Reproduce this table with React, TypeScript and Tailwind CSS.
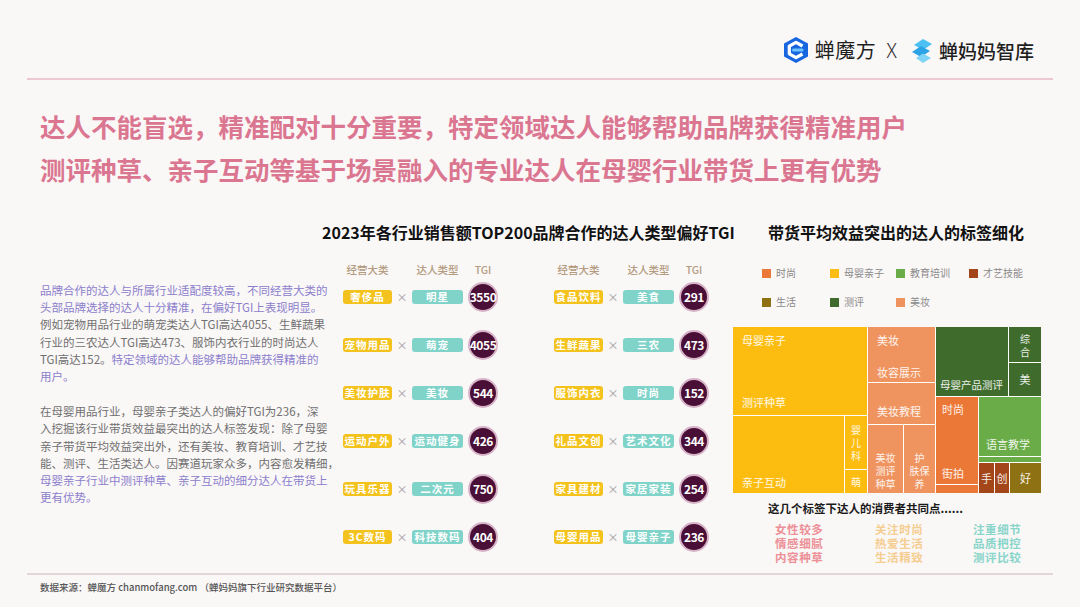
import React from "react";

const leftP1: [string, boolean][][] = [
  [["品牌合作的达人与所属行业适配度较高，不同经营大类的", true]],
  [["头部品牌选择的达人十分精准，在偏好TGI上表现明显。", true]],
  [["例如宠物用品行业的萌宠类达人TGI高达4055、生鲜蔬果", false]],
  [["行业的三农达人TGI高达473、服饰内衣行业的时尚达人", false]],
  [["TGI高达152。", false], ["特定领域的达人能够帮助品牌获得精准的", true]],
  [["用户。", true]],
];

const leftP2: [string, boolean][][] = [
  [["在母婴用品行业，母婴亲子类达人的偏好TGI为236，深", false]],
  [["入挖掘该行业带货效益最突出的达人标签发现：除了母婴", false]],
  [["亲子带货平均效益突出外，还有美妆、教育培训、才艺技", false]],
  [["能、测评、生活类达人。因赛道玩家众多，内容愈发精细，", false]],
  [["母婴亲子行业中测评种草、亲子互动的细分达人在带货上", true]],
  [["更有优势。", true]],
];

const leftRows = [
  ["奢侈品", "明星", "3550"],
  ["宠物用品", "萌宠", "4055"],
  ["美妆护肤", "美妆", "544"],
  ["运动户外", "运动健身", "426"],
  ["玩具乐器", "二次元", "750"],
  ["3C数码", "科技数码", "404"],
];

const rightRows = [
  ["食品饮料", "美食", "291"],
  ["生鲜蔬果", "三农", "473"],
  ["服饰内衣", "时尚", "152"],
  ["礼品文创", "艺术文化", "344"],
  ["家具建材", "家居家装", "254"],
  ["母婴用品", "母婴亲子", "236"],
];

const legend = [
  ["时尚", "bg-[#ec7838]"],
  ["母婴亲子", "bg-[#fdbd10]"],
  ["教育培训", "bg-[#6aac48]"],
  ["才艺技能", "bg-[#a3461a]"],
  ["生活", "bg-[#8d7112]"],
  ["测评", "bg-[#3f6c2d]"],
  ["美妆", "bg-[#ef935f]"],
];

function ChanMoFangIcon() {
  return (
    <svg width="28" height="28" viewBox="0 0 28 28">
      <polygon points="14,1 26,7.5 26,20.5 14,27 2,20.5 2,7.5" fill="#1766e0" />
      <path d="M20.5 10 L14 6.3 L7.3 10.2 V17.8 L14 21.7 L20.5 18" fill="none" stroke="#fff" strokeWidth="3.2" strokeLinejoin="round" />
      <path d="M11.5 14 H20" stroke="#6fc3ff" strokeWidth="3" strokeLinecap="round" />
    </svg>
  );
}

function ChanMaMaIcon() {
  return (
    <svg width="26" height="30" viewBox="0 0 26 30">
      <polygon points="5,10 14,4 23,9 14,15" fill="#4cbff3" />
      <polygon points="3,17 12,11 21,16 12,22" fill="#2ba3e6" />
      <polygon points="7,23 14,18.5 22,23 14,28" fill="#7fd3f7" />
    </svg>
  );
}

function TgiRow({ cat, type, tgi }: { cat: string; type: string; tgi: string }) {
  return (
    <div className="flex items-center h-[30px]">
      <div className="w-[49px] h-[14px] rounded-[3px] bg-[#f4c21c] text-white text-[10.5px] font-bold leading-[14px] text-center tracking-[1px]">
        {cat}
      </div>
      <div className="w-[20px] text-center text-[11px] text-[#9a9a9a] leading-none">×</div>
      <div className="w-[51px] h-[14px] rounded-[3px] bg-[#80d3c9] text-white text-[10.5px] font-bold leading-[14px] text-center tracking-[1px]">
        {type}
      </div>
      <div className="ml-[5px] w-[30px] h-[30px] rounded-full bg-[#4a0f36] border-2 border-[#d7b3c8] flex items-center justify-center text-white text-[12px] font-bold tracking-[-0.4px]">
        {tgi}
      </div>
    </div>
  );
}

function TgiBlock({ rows }: { rows: string[][] }) {
  return (
    <div className="flex flex-col w-[155px]">
      <div className="flex items-center h-[14px] text-[10.5px] text-[#b39c80] font-medium">
        <div className="w-[49px] text-center">经营大类</div>
        <div className="w-[20px]" />
        <div className="w-[51px] text-center">达人类型</div>
        <div className="ml-[5px] w-[30px] text-center">TGI</div>
      </div>
      <div className="flex flex-col gap-[18px] mt-[5px]">
        {rows.map((r) => (
          <TgiRow key={r[0]} cat={r[0]} type={r[1]} tgi={r[2]} />
        ))}
      </div>
    </div>
  );
}

function Treemap() {
  const t = "text-[11px] text-white/90 leading-[13px]";
  const s = "text-[10px] text-white/90 leading-[13px]";
  return (
    <div className="flex gap-px w-[308px] h-[166px] bg-white">
      {/* 母婴亲子 */}
      <div className="w-[134px] flex flex-col gap-px">
        <div className={`h-[88px] bg-[#fdbd10] flex flex-col justify-between px-[9px] pt-[7px] pb-[6px] ${t}`}>
          <span>母婴亲子</span>
          <span>测评种草</span>
        </div>
        <div className="flex-1 flex gap-px">
          <div className={`w-[111px] bg-[#fdbd10] flex items-end px-[9px] pb-[4px] ${t}`}>亲子互动</div>
          <div className="flex-1 flex flex-col gap-px">
            <div className={`h-[53px] bg-[#fdbd10] flex flex-col items-center justify-center ${s}`}>
              <span>婴</span>
              <span>儿</span>
              <span>科</span>
            </div>
            <div className={`flex-1 bg-[#fdbd10] flex items-center justify-center ${s}`}>萌</div>
          </div>
        </div>
      </div>
      {/* 美妆 */}
      <div className="w-[67px] flex flex-col gap-px">
        <div className={`h-[55px] bg-[#ef935f] flex flex-col px-[9px] pt-[7px] ${t}`}>
          <span>美妆</span>
          <span className="mt-[19px]">妆容展示</span>
        </div>
        <div className={`h-[41px] bg-[#ef935f] flex items-end px-[9px] pb-[6px] ${t}`}>美妆教程</div>
        <div className="flex-1 flex gap-px">
          <div className={`w-[35px] bg-[#ef935f] flex flex-col items-center justify-end pb-[3px] ${s}`}>
            <span>美妆</span>
            <span>测评</span>
            <span>种草</span>
          </div>
          <div className={`flex-1 bg-[#ef935f] flex flex-col items-center justify-end pb-[3px] ${s}`}>
            <span>护</span>
            <span>肤保</span>
            <span>养</span>
          </div>
        </div>
      </div>
      {/* 测评 / 时尚 / 教育 */}
      <div className="flex-1 flex flex-col gap-px">
        <div className="h-[69px] flex gap-px">
          <div className="flex-1 bg-[#3f6c2d] flex items-end px-[4px] pb-[5px] text-[10.5px] text-white/90 leading-[13px] whitespace-nowrap">
            母婴产品测评
          </div>
          <div className="w-[32px] flex flex-col gap-px">
            <div className={`h-[35px] bg-[#3f6c2d] flex flex-col items-center justify-center ${s}`}>
              <span>综</span>
              <span>合</span>
            </div>
            <div className={`flex-1 bg-[#3f6c2d] flex items-center justify-center ${t}`}>美</div>
          </div>
        </div>
        <div className="flex-1 flex gap-px">
          <div className="w-[42px] flex flex-col gap-px">
            <div className={`flex-1 bg-[#ec7838] flex flex-col justify-between px-[6px] pt-[6px] pb-[4px] ${t}`}>
              <span>时尚</span>
              <span>街拍</span>
            </div>
            <div className="h-[8px] bg-[#ec7838]" />
          </div>
          <div className="flex-1 flex flex-col gap-px">
            <div className={`h-[59px] bg-[#6aac48] flex items-end px-[7px] pb-[5px] ${t}`}>语言教学</div>
            <div className="h-[5px] bg-[#6aac48]" />
            <div className="flex-1 flex gap-px">
              <div className={`w-[15px] bg-[#a3461a] flex items-center justify-center ${t}`}>手</div>
              <div className={`w-[14px] bg-[#a3461a] flex items-center justify-center ${t}`}>创</div>
              <div className={`flex-1 bg-[#8d7112] flex items-center justify-center ${t}`}>好</div>
            </div>
          </div>
        </div>
      </div>
    </div>
  );
}

export default function App() {
  return (
    <div className="w-[1080px] h-[607px] overflow-hidden bg-[#faf7f7] font-['Noto_Sans_CJK_SC',sans-serif] text-[#222]">
      {/* Logo bar */}
      <div className="h-[78px] flex items-end justify-end pr-[46px] pb-[13px]">
        <div className="flex items-center">
          <ChanMoFangIcon />
          <span className="ml-[5px] text-[20px] leading-none text-[#1f1f1f] tracking-[0.5px]">蝉魔方</span>
          <span className="ml-[10px] text-[20px] leading-none font-light text-[#333]">X</span>
          <span className="ml-[12px]">
            <ChanMaMaIcon />
          </span>
          <span className="ml-[4px] text-[19px] leading-none font-medium text-[#1f1f1f]">蝉妈妈智库</span>
        </div>
      </div>
      <div className="mx-[27px] h-[2px] bg-[#ecc9d0]" />

      {/* Headline */}
      <div className="pl-[40px] pt-[24px] text-[25.5px] leading-[43px] font-bold text-[#db7691]">
        <div>达人不能盲选，精准配对十分重要，特定领域达人能够帮助品牌获得精准用户</div>
        <div>测评种草、亲子互动等基于场景融入的专业达人在母婴行业带货上更有优势</div>
      </div>

      {/* Main */}
      <div className="flex pl-[40px] h-[383px]">
        <div className="w-[282px] pt-[92px] text-[11.5px] leading-[17.2px]">
          {leftP1.map((line, i) => (
            <div key={i} className="whitespace-nowrap">
              {line.map(([s, purple], j) => (
                <span key={j} className={purple ? "text-[#8b80cc]" : "text-[#707070]"}>
                  {s}
                </span>
              ))}
            </div>
          ))}
          <div className="h-[18px]" />
          {leftP2.map((line, i) => (
            <div key={i} className="whitespace-nowrap">
              {line.map(([s, purple], j) => (
                <span key={j} className={purple ? "text-[#8b80cc]" : "text-[#707070]"}>
                  {s}
                </span>
              ))}
            </div>
          ))}
        </div>

        <div className="w-[411px] pt-[31px]">
          <div className="text-[16px] leading-[22px] font-bold text-[#111] whitespace-nowrap">
            2023年各行业销售额TOP200品牌合作的达人类型偏好TGI
          </div>
          <div className="flex gap-[56px] pl-[21px] mt-[20px]">
            <TgiBlock rows={leftRows} />
            <TgiBlock rows={rightRows} />
          </div>
        </div>

        <div className="w-[308px] pt-[31px]">
          <div className="pl-[35px] text-[16px] leading-[22px] font-bold text-[#111] whitespace-nowrap">
            带货平均效益突出的达人的标签细化
          </div>
          <div className="grid grid-cols-[68px_66px_73px_auto] gap-y-[17px] pl-[29px] mt-[24px] text-[10px] text-[#8a8a8a]">
            {legend.map(([label, color]) => (
              <div key={label} className="flex items-center h-[12px]">
                <div className={`w-[9px] h-[9px] ${color}`} />
                <span className="ml-[5px] leading-none">{label}</span>
              </div>
            ))}
          </div>
          <div className="mt-[19px]">
            <Treemap />
          </div>
          <div className="pl-[35px] mt-[7px] text-[11.5px] leading-[16px] font-bold text-[#1a1a1a]">
            这几个标签下达人的消费者共同点......
          </div>
          <div className="flex pl-[42px] mt-[6px] text-[11.5px] leading-[14px] font-bold tracking-[0.6px]">
            <div className="w-[100px] flex flex-col text-[#ec8f96]">
              <span>女性较多</span>
              <span>情感细腻</span>
              <span>内容种草</span>
            </div>
            <div className="w-[98px] flex flex-col text-[#f5cd8f]">
              <span>关注时尚</span>
              <span>热爱生活</span>
              <span>生活精致</span>
            </div>
            <div className="flex flex-col text-[#88d5ca]">
              <span>注重细节</span>
              <span>品质把控</span>
              <span>测评比较</span>
            </div>
          </div>
        </div>
      </div>

      {/* Footer */}
      <div className="mx-[27px] h-[2px] bg-[#e3d6d9]" />
      <div className="pl-[40px] pt-[6px] text-[9.5px] leading-[12px] font-medium text-[#555]">
        数据来源：蝉魔方 chanmofang.com （蝉妈妈旗下行业研究数据平台）
      </div>
    </div>
  );
}
